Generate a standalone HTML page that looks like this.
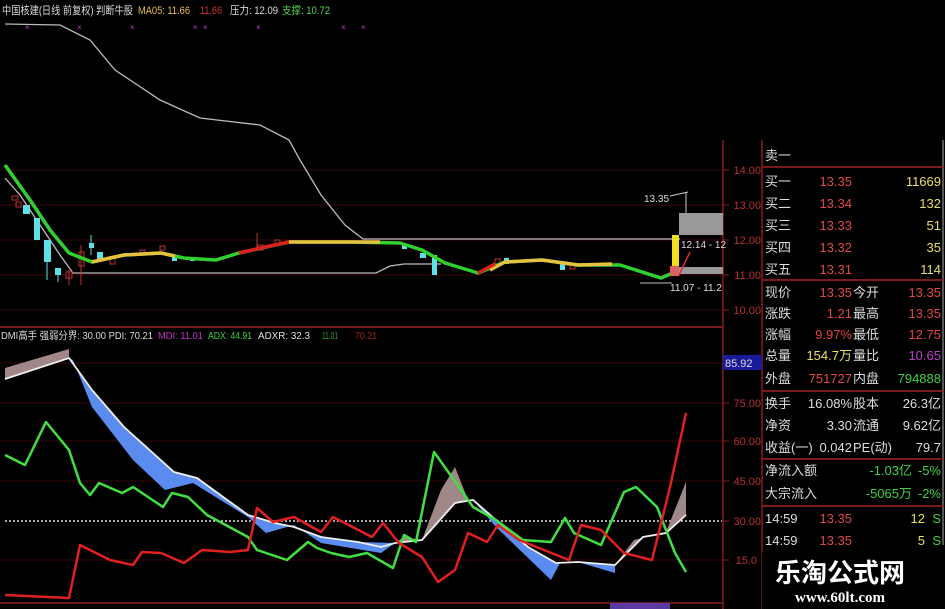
<!DOCTYPE html>
<html><head><meta charset="utf-8"><style>
html,body{margin:0;padding:0;background:#000;width:945px;height:609px;overflow:hidden;font-family:"Liberation Sans","Noto Sans CJK SC",sans-serif}
svg{position:absolute;left:0;top:0}
.t{font-family:"Liberation Sans","Noto Sans CJK SC",sans-serif}
</style></head><body>
<svg width="945" height="609" viewBox="0 0 945 609" xmlns="http://www.w3.org/2000/svg">
<rect width="945" height="609" fill="#000"/>
<g stroke="#3a0808" stroke-width="1">
<line x1="0" y1="170" x2="722" y2="170"/><line x1="0" y1="205" x2="722" y2="205"/>
<line x1="0" y1="240" x2="722" y2="240"/><line x1="0" y1="275" x2="722" y2="275"/>
<line x1="0" y1="310" x2="722" y2="310"/>
<line x1="0" y1="363" x2="722" y2="363"/><line x1="0" y1="403" x2="722" y2="403"/>
<line x1="0" y1="441" x2="722" y2="441"/><line x1="0" y1="481" x2="722" y2="481"/>
<line x1="0" y1="560" x2="722" y2="560"/>
</g>
<line x1="0" y1="327" x2="722" y2="327" stroke="#7a1a1a" stroke-width="2"/>
<line x1="0" y1="603" x2="722" y2="603" stroke="#6a1818" stroke-width="2"/>
<line x1="5" y1="521" x2="722" y2="521" stroke="#ddd" stroke-width="1.5" stroke-dasharray="2,2"/>
<line x1="723" y1="140" x2="723" y2="609" stroke="#8a1a1a" stroke-width="1.5"/>
<line x1="762" y1="140" x2="762" y2="609" stroke="#8a1a1a" stroke-width="1.5"/>
<line x1="943" y1="140" x2="943" y2="545" stroke="#aaa" stroke-width="1"/>
<g stroke="#8a1a1a"><line x1="723" y1="170" x2="729" y2="170"/><line x1="723" y1="205" x2="729" y2="205"/><line x1="723" y1="240" x2="729" y2="240"/><line x1="723" y1="275" x2="729" y2="275"/><line x1="723" y1="310" x2="729" y2="310"/><line x1="723" y1="403" x2="729" y2="403"/><line x1="723" y1="441" x2="729" y2="441"/><line x1="723" y1="481" x2="729" y2="481"/><line x1="723" y1="521" x2="729" y2="521"/><line x1="723" y1="560" x2="729" y2="560"/></g>
<g class="t" font-size="11" fill="#b83030" text-anchor="end">
<text x="761" y="174">14.00</text><text x="761" y="209">13.00</text><text x="761" y="244">12.00</text><text x="761" y="279">11.00</text><text x="761" y="314">10.00</text>
<text x="761" y="407">75.00</text><text x="761" y="445">60.00</text><text x="761" y="485">45.00</text><text x="761" y="525">30.00</text><text x="757" y="564">15.0</text>
</g>
<rect x="723" y="355" width="39" height="15" fill="#1a1a9a"/>
<text x="725" y="367" class="t" font-size="11" fill="#ddd">85.92</text>

<g class="t" font-size="11">
<text x="2" y="14" fill="#ddd" textLength="131" lengthAdjust="spacingAndGlyphs">中国核建(日线 前复权) 判断牛股</text>
<text x="138" y="14" fill="#e8c040" textLength="52" lengthAdjust="spacingAndGlyphs">MA05: 11.66</text>
<text x="200" y="14" fill="#d03030" textLength="22" lengthAdjust="spacingAndGlyphs">11.66</text>
<text x="230" y="14" fill="#ddd" textLength="48" lengthAdjust="spacingAndGlyphs">压力: 12.09</text>
<text x="282" y="14" fill="#50d050" textLength="48" lengthAdjust="spacingAndGlyphs">支撑: 10.72</text>
</g>
<g class="t" font-size="8" fill="#c040d0"><text x="25" y="30">×</text><text x="77" y="30">×</text><text x="130" y="30">×</text><text x="193" y="30">×</text><text x="203" y="30">×</text><text x="256" y="30">×</text><text x="341" y="30">×</text><text x="361" y="30">×</text></g>

<polyline fill="none" stroke="#bbb" stroke-width="1.3" points="5,24 60,25 90,40 115,70 160,100 200,118 260,125 289,140 300,160 321,195 345,225 363,239 680,239"/>
<polyline fill="none" stroke="#bbb" stroke-width="1.3" points="5,178 20,195 40,225 60,255 73,273 376,273 390,266 404,264 441,264"/>
<g fill="#5ee0e8">
<rect x="23" y="205" width="7" height="9"/><rect x="34" y="218" width="6" height="22"/><rect x="44" y="240" width="7" height="22"/><rect x="55" y="268" width="6" height="7"/>
<rect x="89" y="243" width="5" height="5"/><rect x="97" y="252" width="6" height="8"/><rect x="172" y="256" width="5" height="5"/><rect x="190" y="257" width="5" height="4"/>
<rect x="402" y="245" width="5" height="4"/><rect x="420" y="253" width="6" height="5"/><rect x="432" y="255" width="5" height="20"/><rect x="504" y="258" width="5" height="6"/><rect x="560" y="263" width="5" height="7"/>
</g>
<g fill="none" stroke="#c03030" stroke-width="1">
<rect x="12" y="196" width="6" height="4"/><rect x="16" y="202" width="5" height="5"/><rect x="66" y="272" width="6" height="6"/><rect x="79" y="252" width="5" height="14"/><rect x="110" y="258" width="5" height="6"/>
<rect x="140" y="250" width="5" height="4"/><rect x="160" y="246" width="5" height="4"/><rect x="258" y="245" width="5" height="5"/><rect x="275" y="240" width="5" height="4"/><rect x="495" y="259" width="5" height="5"/><rect x="570" y="264" width="5" height="5"/>
</g>
<g stroke="#c03030"><line x1="81" y1="245" x2="81" y2="285"/><line x1="69" y1="270" x2="69" y2="285"/><line x1="257" y1="233" x2="257" y2="250"/></g>
<g stroke="#5ee0e8"><line x1="47" y1="262" x2="47" y2="280"/><line x1="91" y1="235" x2="91" y2="255"/><line x1="58" y1="275" x2="58" y2="282"/></g>
<polyline fill="none" stroke="#30d030" stroke-width="3.5" stroke-linejoin="round" points="5,165 30,200 50,230 69,253 92,262 124,255 161,253 184,258 216,260 239,253 289,242 349,242 400,243 422,250 445,263 478,273 505,262 542,260 578,265 620,265 661,278 680,270"/>
<polyline fill="none" stroke="#e8c040" stroke-width="3.5" points="92,262 110,258 124,255 161,253 175,256"/>
<polyline fill="none" stroke="#d82020" stroke-width="3.5" points="239,253 265,247 289,242"/>
<polyline fill="none" stroke="#e8c040" stroke-width="3.5" points="289,242 320,242 349,242 380,242"/>
<polyline fill="none" stroke="#e8c040" stroke-width="3.5" points="490,270 505,262 542,260 578,265 612,264"/>
<polyline fill="none" stroke="#d82020" stroke-width="3.5" points="478,273 495,264"/>
<rect x="679" y="213" width="44" height="22" fill="#999"/>
<rect x="679" y="267" width="44" height="7" fill="#999"/>
<rect x="672" y="235" width="7" height="33" fill="#f0e020"/>
<rect x="670" y="266" width="9" height="10" fill="#e06060"/>
<line x1="679" y1="275" x2="690" y2="252" stroke="#e03030" stroke-width="1.5"/>
<line x1="686" y1="192" x2="686" y2="213" stroke="#ccc"/><line x1="670" y1="196" x2="688" y2="192" stroke="#ccc"/>
<g class="t" font-size="10" fill="#ddd"><text x="644" y="202">13.35</text><text x="681" y="248">12.14 - 12</text><text x="670" y="291">11.07 - 11.2</text></g>
<line x1="640" y1="283" x2="672" y2="283" stroke="#bbb"/>

<g class="t" font-size="10.5">
<text x="1" y="339" fill="#ddd" textLength="152" lengthAdjust="spacingAndGlyphs">DMI高手 强弱分界: 30.00 PDI: 70.21</text>
<text x="158" y="339" fill="#c030c0" textLength="45" lengthAdjust="spacingAndGlyphs">MDI: 11.01</text>
<text x="208" y="339" fill="#40d040" textLength="44" lengthAdjust="spacingAndGlyphs">ADX: 44.91</text>
<text x="258" y="339" fill="#ddd" textLength="52" lengthAdjust="spacingAndGlyphs">ADXR: 32.3</text>
<text x="322" y="339" fill="#30a030" textLength="16" lengthAdjust="spacingAndGlyphs">11.01</text><text x="355" y="339" fill="#a02020" textLength="22" lengthAdjust="spacingAndGlyphs">70.21</text>
</g>
<polygon fill="#a08888" points="5,368 69,349 69,358 5,379"/>
<polygon fill="#5a8cf0" points="69,358 73,360 92,407 133,460 165,490 193,483 248,517 266,533 294,525 321,543 381,553 395,543 358,542 321,537 294,527 275,523 248,515 197,478 174,472 124,427 92,390"/>
<polygon fill="#a08888" points="395,543 404,537 422,540 441,490 455,467 468,500 473,500 455,503 422,540"/>
<polygon fill="#5a8cf0" points="473,500 496,527 551,580 560,563 578,562 615,573 615,565 578,562 556,563 528,547 496,520"/>
<polygon fill="#a08888" points="615,565 634,540 666,532 686,482 686,515 666,533 643,537"/>
<polyline fill="none" stroke="#eee" stroke-width="1.8" points="5,379 69,358 92,390 124,427 174,472 197,478 248,515 275,523 294,527 321,537 358,542 381,547 395,543 422,540 455,503 473,500 496,520 528,547 556,563 578,562 615,565 643,537 666,533 686,515"/>
<polyline fill="none" stroke="#40e040" stroke-width="2.5" stroke-linejoin="round" points="5,455 25,465 46,422 69,450 80,483 90,495 99,483 122,493 133,487 163,507 172,493 188,497 207,515 248,537 257,550 287,560 308,542 317,548 331,553 349,557 367,553 393,568 404,535 416,542 434,452 459,487 473,507 496,520 523,540 551,542 565,518 574,533 601,545 624,492 636,487 657,507 675,553 686,572"/>
<polyline fill="none" stroke="#e02020" stroke-width="2.5" stroke-linejoin="round" points="5,595 69,598 80,545 110,560 133,565 142,552 161,553 184,563 202,550 230,552 248,550 257,508 273,522 294,517 321,532 333,517 372,537 383,523 399,543 422,557 438,582 455,570 468,533 487,542 498,525 519,540 569,560 581,525 601,530 624,553 652,560 670,487 686,413"/>
<rect x="610" y="603" width="60" height="6" fill="#5a3aa0"/>

<g stroke="#7a1a1a" stroke-width="2"><line x1="762" y1="167" x2="943" y2="167"/><line x1="762" y1="280" x2="943" y2="280"/><line x1="762" y1="391" x2="943" y2="391"/><line x1="762" y1="459" x2="943" y2="459"/><line x1="762" y1="506" x2="943" y2="506"/></g>
<g class="t" font-size="13">
<g fill="#ddd"><text x="765" y="160">卖一</text><text x="765" y="186">买一</text><text x="765" y="208">买二</text><text x="765" y="230">买三</text><text x="765" y="252">买四</text><text x="765" y="274">买五</text>
<text x="765" y="297">现价</text><text x="765" y="318">涨跌</text><text x="765" y="339">涨幅</text><text x="765" y="360">总量</text><text x="765" y="383">外盘</text>
<text x="765" y="408">换手</text><text x="765" y="430">净资</text><text x="765" y="452">收益(一)</text><text x="765" y="475">净流入额</text><text x="765" y="498">大宗流入</text>
<text x="765" y="523">14:59</text><text x="765" y="545">14:59</text>
<text x="853" y="297">今开</text><text x="853" y="318">最高</text><text x="853" y="339">最低</text><text x="853" y="360">量比</text><text x="853" y="383">内盘</text>
<text x="853" y="408">股本</text><text x="853" y="430">流通</text><text x="853" y="452">PE(动)</text></g>
<g fill="#e04848" text-anchor="end"><text x="852" y="186">13.35</text><text x="852" y="208">13.34</text><text x="852" y="230">13.33</text><text x="852" y="252">13.32</text><text x="852" y="274">13.31</text>
<text x="852" y="297">13.35</text><text x="852" y="318">1.21</text><text x="852" y="339">9.97%</text><text x="852" y="383">751727</text>
<text x="941" y="297">13.35</text><text x="941" y="318">13.35</text><text x="941" y="339">12.75</text>
<text x="852" y="523">13.35</text><text x="852" y="545">13.35</text></g>
<g fill="#e8e060" text-anchor="end"><text x="941" y="186">11669</text><text x="941" y="208">132</text><text x="941" y="230">51</text><text x="941" y="252">35</text><text x="941" y="274">114</text><text x="852" y="360">154.7万</text><text x="925" y="523">12</text><text x="925" y="545">5</text></g>
<g fill="#ddd" text-anchor="end"><text x="852" y="408">16.08%</text><text x="852" y="430">3.30</text><text x="852" y="452">0.042</text><text x="941" y="408">26.3亿</text><text x="941" y="430">9.62亿</text><text x="941" y="452">79.7</text></g>
<text x="941" y="360" fill="#c040d0" text-anchor="end">10.65</text>
<g fill="#40d040" text-anchor="end"><text x="941" y="383">794888</text><text x="912" y="475">-1.03亿</text><text x="941" y="475">-5%</text><text x="912" y="498">-5065万</text><text x="941" y="498">-2%</text><text x="941" y="523">S</text><text x="941" y="545">S</text></g>
</g>
<rect x="762" y="552" width="183" height="57" fill="#000"/>
<text x="840" y="582" text-anchor="middle" font-family="'Noto Sans CJK SC',sans-serif" font-weight="bold" font-size="26" fill="#fff">乐淘公式网</text>
<text x="840" y="602" text-anchor="middle" font-family="'Liberation Serif',serif" font-weight="bold" font-size="15" fill="#fff">www.60lt.com</text>
</svg>
</body></html>
